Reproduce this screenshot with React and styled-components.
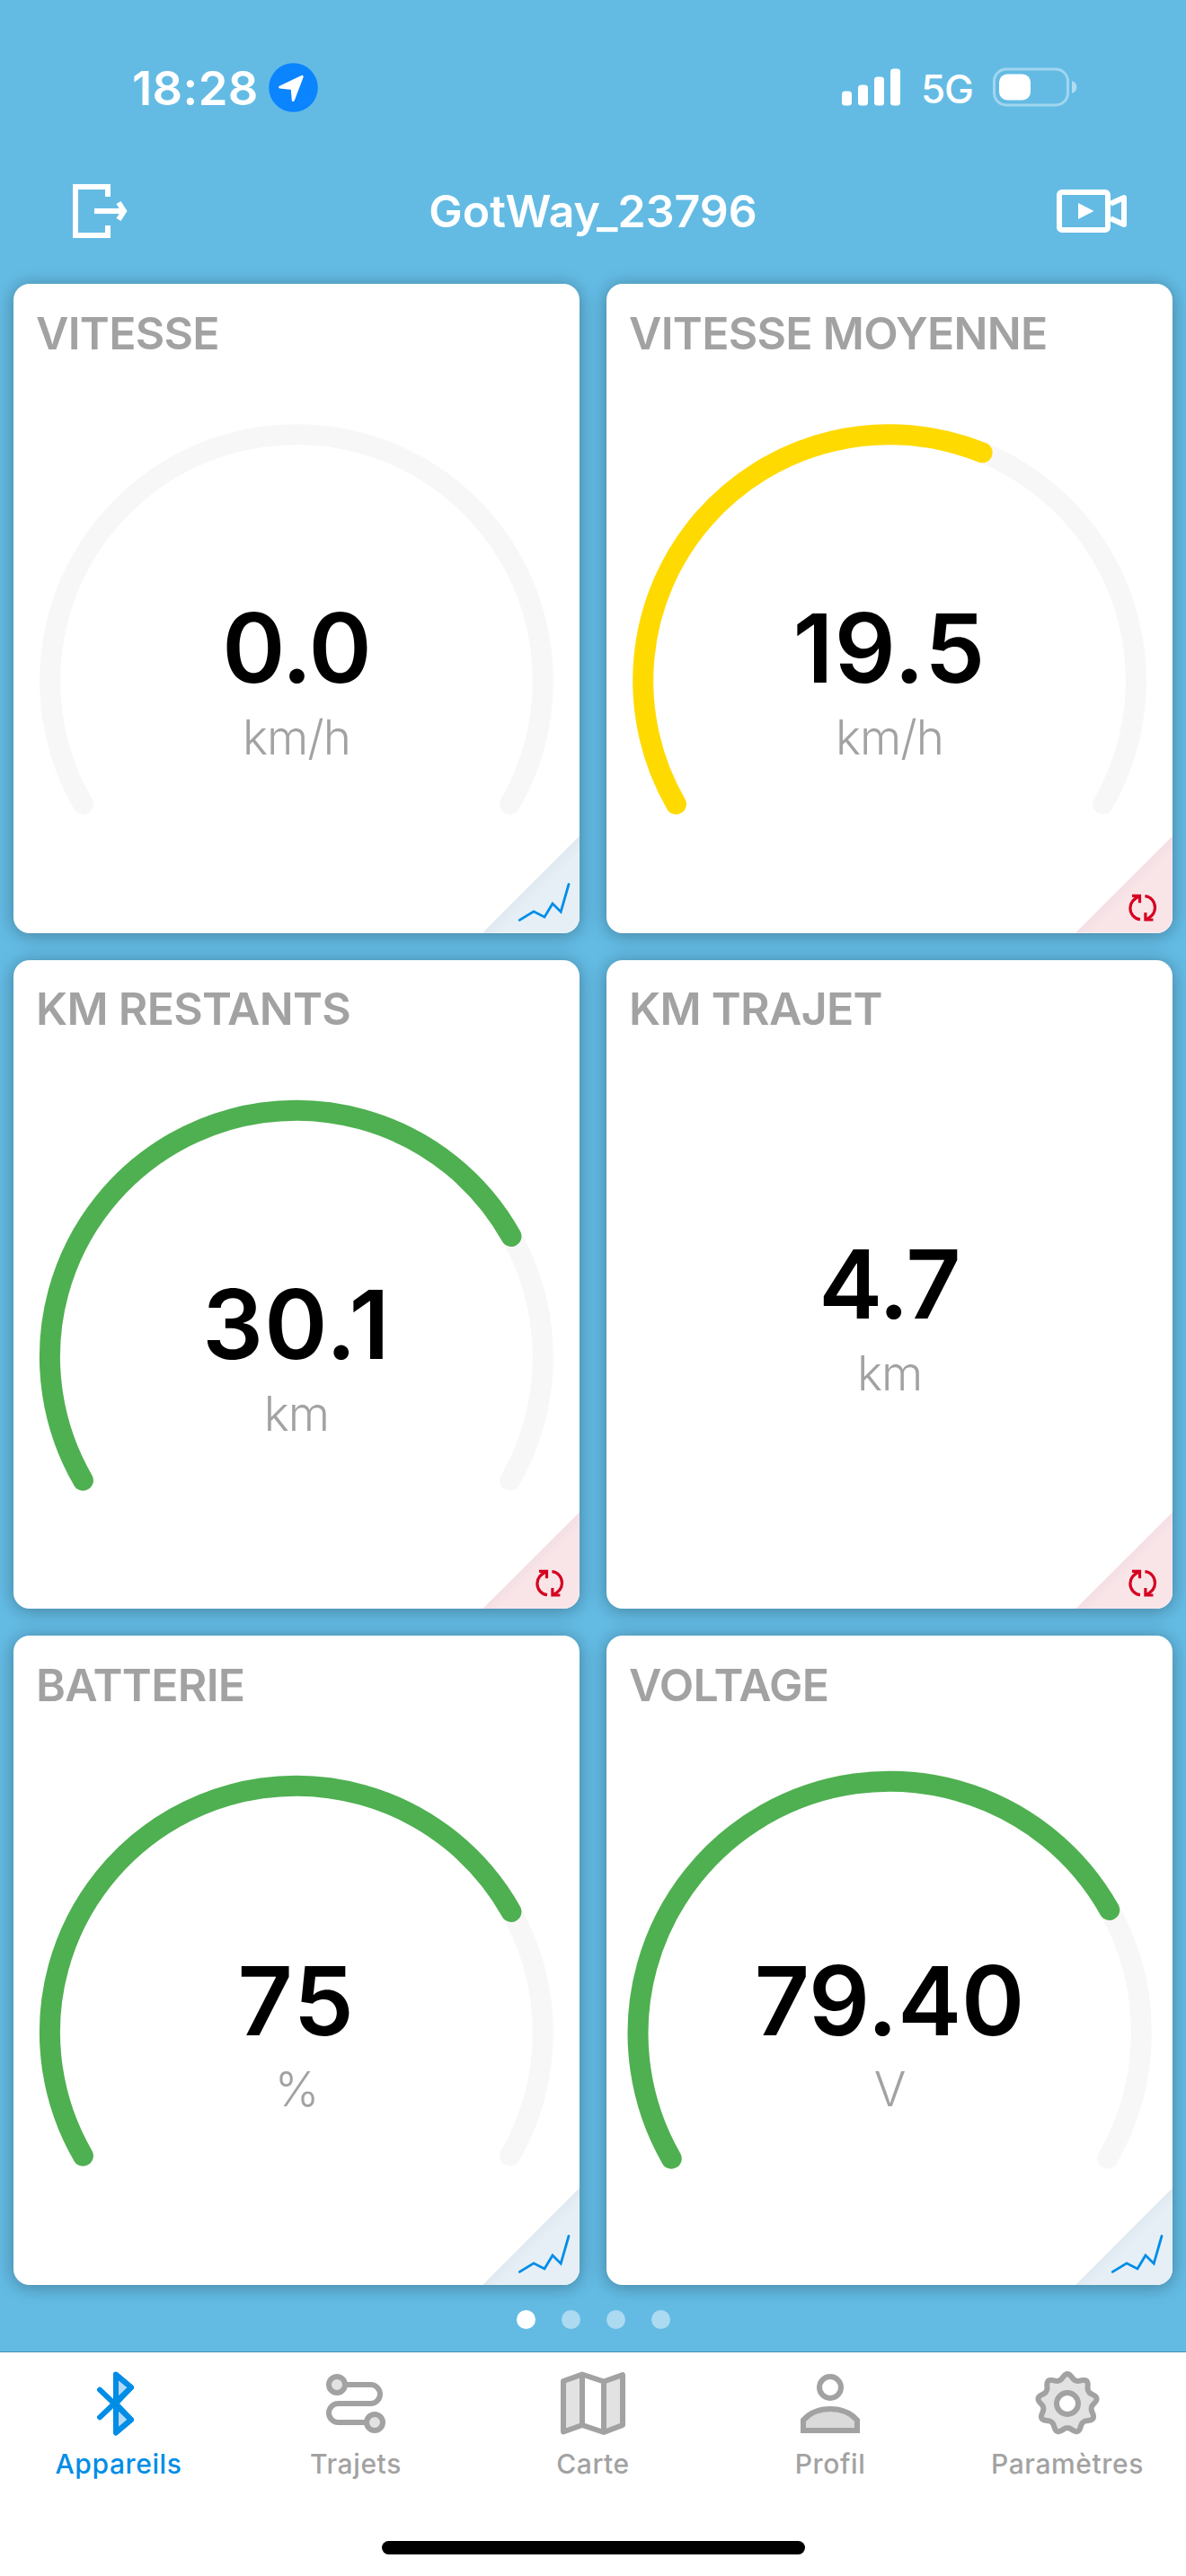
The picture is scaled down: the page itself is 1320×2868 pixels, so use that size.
import styled, { createGlobalStyle } from 'styled-components';

const GlobalStyle = createGlobalStyle`
    * {
        box-sizing: border-box;
    }

    body {
        margin: 0;
        font-family: 'Inter', 'Liberation Sans', sans-serif;
        background: #63bbe4;
    }

    svg {
        display: block;
        flex-shrink: 0;
    }
`;

const Screen = styled.div`
    display: flex;
    flex-direction: column;
    width: 1320px;
    height: 2868px;
    background: #63bbe4;
    overflow: hidden;
`;

const StatusBar = styled.div`
    display: flex;
    align-items: center;
    justify-content: space-between;
    height: 194px;
    padding: 0 121px 0 147px;
    color: #fff;
`;

const StatusGroup = styled.div`
    display: flex;
    align-items: center;
`;

const Clock = styled.span`
    width: 152px;
    padding-top: 2px;
    font-size: 52.5px;
    font-weight: 600;
    letter-spacing: 0.4px;
    white-space: nowrap;
`;

const Network = styled.span`
    width: 80px;
    margin-left: 22px;
    padding-top: 4px;
    font-size: 44px;
    font-weight: 500;
    letter-spacing: -1.2px;
`;

const Header = styled.header`
    display: flex;
    align-items: center;
    justify-content: space-between;
    height: 82px;
    padding: 0 63px 0 78px;
    color: #fff;
`;

const DeviceName = styled.h1`
    margin: 0;
    font-size: 50px;
    font-weight: 600;
    letter-spacing: 0;
`;

const Dashboard = styled.main`
    display: grid;
    grid-template-columns: 630px 630px;
    grid-auto-rows: 722.7px;
    gap: 30px;
    padding: 40px 15px 0;
`;

const Card = styled.section`
    position: relative;
    background: #fff;
    border-radius: 18px;
    box-shadow: 0 2px 20px rgba(0, 0, 0, 0.32);
    overflow: hidden;
`;

const CardTitle = styled.h2`
    height: 84.6px;
    margin: 0;
    padding: 24.6px 25px 0;
    font-size: 50px;
    font-weight: 600;
    line-height: 60px;
    letter-spacing: -0.7px;
    color: #a2a2a2;
    white-space: nowrap;
`;

const CardBody = styled.div`
    display: grid;
    justify-items: center;
    align-items: start;

    > * {
        grid-area: 1 / 1;
    }
`;

const Dial = styled.svg`
    margin-top: 57.4px;
    fill: none;
    stroke-width: 23px;
    stroke-linecap: round;
`;

const Reading = styled.div`
    display: flex;
    flex-direction: column;
    align-items: center;
    margin-top: ${props => props.$dial ? '268.7px' : '223.7px'};
`;

const Value = styled.span`
    font-size: 106.5px;
    font-weight: 600;
    line-height: 106px;
    letter-spacing: ${props => props.$spacing || '0'};
    color: #000;
`;

const Unit = styled.span`
    margin-top: 13.6px;
    font-size: 53px;
    font-weight: 300;
    line-height: 64px;
    letter-spacing: -1px;
    color: #a2a2a2;
`;

const Corner = styled.div`
    position: absolute;
    right: 0;
    bottom: 0;
    width: 108px;
    height: 108px;
    background: ${props => props.$reset
        ? 'linear-gradient(135deg, #f3dfe4 50%, #f9e5e8 58%)'
        : 'linear-gradient(135deg, #dfe9ef 50%, #e6eff6 58%)'};
    clip-path: polygon(100% 0, 100% 100%, 0 100%);
`;

const CornerIcon = styled.svg`
    width: 108px;
    height: 108px;
    fill: none;
    stroke: ${props => props.$reset ? '#d60021' : '#008de6'};
    stroke-width: ${props => props.$reset ? '3.2px' : '2.8px'};
`;

const Pager = styled.div`
    display: flex;
    justify-content: center;
    gap: 29px;
    height: 46px;
    margin-top: 27.9px;
    flex-shrink: 0;
`;

const Dot = styled.i`
    width: 21px;
    height: 21px;
    border-radius: 50%;
    background: ${props => props.$active ? '#fff' : '#acdaf0'};
`;

const TabBar = styled.nav`
    display: grid;
    grid-template-columns: repeat(5, 264px);
    height: 211px;
    padding-top: 21px;
    background: #fff;
    border-top: 1px solid #4790ae;
`;

const Tab = styled.a`
    display: flex;
    flex-direction: column;
    align-items: center;
    font-size: 30px;
    font-weight: 500;
    line-height: 36px;
    letter-spacing: 0.6px;
    color: ${props => props.$active ? '#008de6' : '#a2a2a2'};

    svg {
        width: 72px;
        height: 72px;
        margin-bottom: 13px;
        fill: none;
        stroke: currentColor;
        stroke-width: 6px;
    }
`;

const HomeArea = styled.div`
    display: flex;
    justify-content: center;
    flex: 1;
    background: #fff;
`;

const HomeIndicator = styled.div`
    width: 471px;
    height: 15px;
    border-radius: 8px;
    background: #000;
`;

const GREEN = '#4eb050';
const YELLOW = '#ffda00';

const metrics = [
    { title: 'VITESSE', value: '0.0', unit: 'km/h', progress: 0, spacing: '-1px' },
    { title: 'VITESSE MOYENNE', value: '19.5', unit: 'km/h', progress: 0.592, color: YELLOW, reset: true, spacing: '1.2px' },
    { title: 'KM RESTANTS', value: '30.1', unit: 'km', progress: 0.7525, color: GREEN, reset: true, spacing: '1.2px' },
    { title: 'KM TRAJET', value: '4.7', unit: 'km', reset: true, spacing: '-1px' },
    { title: 'BATTERIE', value: '75', unit: '%', progress: 0.7525, color: GREEN, spacing: '1.8px' },
    { title: 'VOLTAGE', value: '79.40', unit: 'V', progress: 0.7535, color: GREEN, radius: 280.3 }
];

// The dial sweeps 240 degrees, starting at the lower left
function arcPath(radius, progress) {
    const point = angle => {
        const rad = angle * Math.PI / 180;
        return `${(300 + radius * Math.cos(rad)).toFixed(2)} ${(300 + radius * Math.sin(rad)).toFixed(2)}`;
    };
    const sweep = 240 * progress;
    return `M${point(150)} A${radius} ${radius} 0 ${sweep > 180 ? 1 : 0} 1 ${point(150 + sweep)}`;
}

function gearPath() {
    const points = [];
    for (let i = 0; i < 360; i += 2) {
        const rad = i * Math.PI / 180;
        const r = 27.2 + 5.8 * Math.pow((1 + Math.cos(9 * rad)) / 2, 1.3);
        points.push(`${(36 + r * Math.sin(rad)).toFixed(2)} ${(36 - r * Math.cos(rad)).toFixed(2)}`);
    }
    return `M${points.join('L')}Z`;
}

function Gauge({ radius = 274.3, progress, color }) {
    return (
        <Dial width="600" height="460" viewBox="0 0 600 460">
            <path d={arcPath(radius, 1)} stroke="#f7f7f7" />
            {progress > 0 && <path d={arcPath(radius, progress)} stroke={color} />}
        </Dial>
    )
}

function ResetIcon() {
    return (
        <CornerIcon $reset viewBox="0 0 108 108">
            <g transform="translate(56.7 61.7)">
                <path d="M6.3 4.7H14.8V12.6" />
                <path d="M14.6 5C8 7.8 4.2 12 4.2 18.2C4.2 25 9 30.4 15.3 31" />
                <path d="M29.7 31.3H21.2V23.4" />
                <path d="M21.4 31C28 28.2 31.8 24 31.8 17.8C31.8 11 27 5.6 20.7 5" />
            </g>
        </CornerIcon>
    )
}

function TrendIcon() {
    return (
        <CornerIcon viewBox="0 0 108 108">
            <path d="M41.3 93.4L57 83.8L69 90L78 75L87.2 84.2L96 53.5" strokeLinecap="round" />
        </CornerIcon>
    )
}

function MetricCard({ metric }) {
    const hasDial = metric.progress !== undefined;

    return (
        <Card>
            <CardTitle>{metric.title}</CardTitle>
            <CardBody>
                {hasDial && <Gauge radius={metric.radius} progress={metric.progress} color={metric.color} />}
                <Reading $dial={hasDial}>
                    <Value $spacing={metric.spacing}>{metric.value}</Value>
                    <Unit>{metric.unit}</Unit>
                </Reading>
            </CardBody>
            <Corner $reset={metric.reset}>
                {metric.reset ? <ResetIcon /> : <TrendIcon />}
            </Corner>
        </Card>
    )
}

function App() {
    return (
        <Screen>
            <GlobalStyle />
            <StatusBar>
                <StatusGroup>
                    <Clock>18:28</Clock>
                    <svg width="55" height="55" viewBox="0 0 55 55">
                        <circle cx="27.5" cy="27.5" r="27.3" fill="#0a84ff" />
                        <path d="M12.6 27L37.2 15.4L27.3 41.5L26.2 28.6Z" fill="#fff" stroke="#fff" strokeWidth="3" strokeLinejoin="round" />
                    </svg>
                </StatusGroup>
                <StatusGroup>
                    <svg width="66" height="42" viewBox="0 0 66 42" fill="#fff">
                        <rect x="0" y="25.5" width="11" height="16" rx="3.5" />
                        <rect x="18" y="18.5" width="11" height="23" rx="3.5" />
                        <rect x="36" y="9.5" width="11" height="32" rx="3.5" />
                        <rect x="54" y="0.5" width="11" height="41" rx="3.5" />
                    </svg>
                    <Network>5G</Network>
                    <svg width="94" height="44" viewBox="0 0 94 44">
                        <rect x="1.5" y="2" width="82" height="40" rx="13.5" fill="none" stroke="#fff" strokeOpacity="0.4" strokeWidth="3" />
                        <rect x="7" y="7.5" width="35" height="29" rx="9" fill="#fff" />
                        <path d="M88 15Q93.4 17 93.4 22T88 29Z" fill="#fff" fillOpacity="0.5" />
                    </svg>
                </StatusGroup>
            </StatusBar>
            <Header>
                <svg width="66" height="66" viewBox="0 0 66 66" fill="none" stroke="#fff" strokeWidth="6">
                    <path d="M42 17V6H6V60H42V49" />
                    <path d="M27 33H60" />
                    <path d="M54 23.5L60 33L54 42.5" />
                </svg>
                <DeviceName>GotWay_23796</DeviceName>
                <svg width="81" height="60" viewBox="0 0 81 60" fill="none" stroke="#fff" strokeWidth="6">
                    <rect x="3" y="9" width="54" height="42" rx="3" />
                    <path d="M60 21.8L75 15V45L60 38.2" strokeLinejoin="round" />
                    <path d="M24 21V39L41.5 30Z" fill="#fff" stroke="none" />
                </svg>
            </Header>
            <Dashboard>
                {metrics.map(metric => <MetricCard key={metric.title} metric={metric} />)}
            </Dashboard>
            <Pager>
                <Dot $active />
                <Dot />
                <Dot />
                <Dot />
            </Pager>
            <TabBar>
                <Tab $active>
                    <svg viewBox="0 0 72 72" strokeLinecap="round" strokeLinejoin="round">
                        <path d="M33 36V4L50 18ZM33 36L50 54L33 68Z" fill="#b2daf7" />
                        <path d="M15 20.7L50 54L33 68.5V3.5L50 18L15 51.3" />
                    </svg>
                    Appareils
                </Tab>
                <Tab>
                    <svg viewBox="0 0 72 72">
                        <circle cx="15" cy="15" r="9" fill="#e2e2e2" />
                        <circle cx="57" cy="57" r="9" fill="#e2e2e2" />
                        <path d="M24 15H52.5A10.5 10.5 0 0 1 52.5 36H16.5A10.5 10.5 0 0 0 16.5 57H48" />
                    </svg>
                    Trajets
                </Tab>
                <Tab>
                    <svg viewBox="0 0 72 72" strokeLinejoin="round">
                        <path d="M3 11.5L24 3.5V60L3 68ZM48 11.5L69 4V60L48 68Z" fill="#e2e2e2" stroke="none" />
                        <path d="M3 11L24 3.5L48 11.5L69 4V60L48 68L24 60L3 67.5ZM24 3.5V60M48 11.5V68" />
                    </svg>
                    Carte
                </Tab>
                <Tab>
                    <svg viewBox="0 0 72 72">
                        <circle cx="36" cy="18" r="12" />
                        <path d="M6 54.5C13 46.5 23 42 36 42S59 46.5 66 54.5V66H6Z" fill="#dadada" />
                    </svg>
                    Profil
                </Tab>
                <Tab>
                    <svg viewBox="0 0 72 72" strokeLinejoin="round">
                        <path d={gearPath()} fill="#e2e2e2" />
                        <circle cx="36" cy="36" r="12" fill="#fff" />
                    </svg>
                    Paramètres
                </Tab>
            </TabBar>
            <HomeArea>
                <HomeIndicator />
            </HomeArea>
        </Screen>
    )
}

export default App;
